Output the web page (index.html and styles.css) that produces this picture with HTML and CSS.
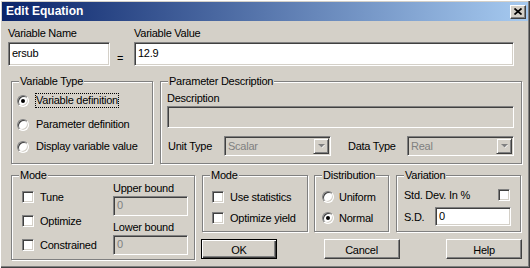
FILE: index.html
```html
<!DOCTYPE html>
<html lang="en">
<head>
    <meta charset="UTF-8">
    <title>Edit Equation</title>
    <link rel="stylesheet" href="styles.css">
</head>
<body>
    <div class="window">
        <div class="titlebar">
            <span class="title">Edit Equation</span>
            <button class="close-btn" type="button">
                <svg width="8" height="7" viewBox="0 0 8 7"><path d="M0.5 0.5 L7.5 6.5 M7.5 0.5 L0.5 6.5" stroke="#000" stroke-width="1.7" fill="none"/></svg>
            </button>
        </div>
        <div class="content">
            <div class="var-row">
                <div class="field name-field">
                    <label>Variable Name</label>
                    <div class="textbox">ersub</div>
                </div>
                <span class="equals">=</span>
                <div class="field value-field">
                    <label>Variable Value</label>
                    <div class="textbox">12.9</div>
                </div>
            </div>

            <div class="group-row">
                <fieldset class="group type-group">
                    <legend>Variable Type</legend>
                    <div class="type-body">
                        <div class="option">
                            <span class="radio checked"></span>
                            <span class="radio-label focused">Variable definition</span>
                        </div>
                        <div class="option second">
                            <span class="radio"></span>
                            <span class="radio-label">Parameter definition</span>
                        </div>
                        <div class="option third">
                            <span class="radio"></span>
                            <span class="radio-label">Display variable value</span>
                        </div>
                    </div>
                </fieldset>
                <fieldset class="group desc-group">
                    <legend>Parameter Description</legend>
                    <div class="desc-body">
                        <label>Description</label>
                        <div class="textbox disabled desc-box"></div>
                        <div class="combo-row">
                            <span class="unit-label">Unit Type</span>
                            <div class="combo">
                                <span class="combo-text">Scalar</span>
                                <span class="combo-btn"><svg width="7" height="5" viewBox="0 0 7 5"><path d="M1 1h6l-3 3z" fill="#fff"/><path d="M0 0h7l-3.5 3.5z" fill="#808080"/></svg></span>
                            </div>
                            <span class="data-label">Data Type</span>
                            <div class="combo">
                                <span class="combo-text">Real</span>
                                <span class="combo-btn"><svg width="7" height="5" viewBox="0 0 7 5"><path d="M1 1h6l-3 3z" fill="#fff"/><path d="M0 0h7l-3.5 3.5z" fill="#808080"/></svg></span>
                            </div>
                        </div>
                    </div>
                </fieldset>
            </div>

            <div class="bottom-row">
                <fieldset class="group mode-group">
                    <legend>Mode</legend>
                    <div class="mode-body">
                        <div class="check-col">
                            <div class="check-row"><span class="checkbox"></span><span class="check-label">Tune</span></div>
                            <div class="check-row"><span class="checkbox"></span><span class="check-label">Optimize</span></div>
                            <div class="check-row"><span class="checkbox"></span><span class="check-label">Constrained</span></div>
                        </div>
                        <div class="bound-col">
                            <label>Upper bound</label>
                            <div class="textbox disabled bound-box">0</div>
                            <label class="lower">Lower bound</label>
                            <div class="textbox disabled bound-box">0</div>
                        </div>
                    </div>
                </fieldset>

                <div class="right-col">
                    <div class="small-groups">
                        <fieldset class="group stat-group">
                            <legend>Mode</legend>
                            <div class="stat-body">
                                <div class="check-row"><span class="checkbox"></span><span class="check-label">Use statistics</span></div>
                                <div class="check-row"><span class="checkbox"></span><span class="check-label">Optimize yield</span></div>
                            </div>
                        </fieldset>
                        <fieldset class="group dist-group">
                            <legend>Distribution</legend>
                            <div class="dist-body">
                                <div class="dist-row"><span class="radio"></span><span class="dist-label">Uniform</span></div>
                                <div class="dist-row"><span class="radio checked"></span><span class="dist-label">Normal</span></div>
                            </div>
                        </fieldset>
                        <fieldset class="group var-group">
                            <legend>Variation</legend>
                            <div class="var-body">
                                <div class="std-row">
                                    <span>Std. Dev. In %</span>
                                    <span class="checkbox"></span>
                                </div>
                                <div class="sd-row">
                                    <span>S.D.</span>
                                    <div class="textbox sd-box">0</div>
                                </div>
                            </div>
                        </fieldset>
                    </div>
                    <div class="buttons">
                        <button class="btn default" type="button">OK</button>
                        <button class="btn" type="button">Cancel</button>
                        <button class="btn" type="button">Help</button>
                    </div>
                </div>
            </div>
        </div>
    </div>
</body>
</html>
```

FILE: styles.css
```css
body {
    margin: 0;
    font-family: "Liberation Sans", Arial, sans-serif;
    font-size: 11px;
    letter-spacing: -0.25px;
    color: #000000;
    background-color: #d4d0c8;
}
.window {
    width: 530px;
    height: 268px;
    box-sizing: border-box;
    padding: 2px;
    background-color: #d4d0c8;
    box-shadow: inset 1px 1px #ffffff, inset -1px -1px #404040, inset -2px -2px #808080;
}
.titlebar {
    display: flex;
    justify-content: space-between;
    align-items: center;
    height: 19px;
    padding-left: 4px;
    background: linear-gradient(to right, #0a246a, #a6caf0);
}
.title {
    color: #ffffff;
    font-weight: bold;
    font-size: 12px;
    letter-spacing: 0;
    line-height: 19px;
}
.close-btn {
    display: flex;
    justify-content: center;
    align-items: center;
    width: 16px;
    height: 14px;
    margin-right: 2px;
    padding: 0;
    box-sizing: border-box;
    border: 1px solid;
    border-color: #ffffff #404040 #404040 #ffffff;
    box-shadow: inset -1px -1px #808080;
    background-color: #d4d0c8;
}
.content {
    padding: 6px 0 0 6px;
}
label {
    display: block;
    line-height: 13px;
}

/* sunken edit boxes */
.textbox {
    box-sizing: border-box;
    height: 24px;
    padding: 0 3px;
    line-height: 20px;
    border: 1px solid;
    border-color: #808080 #ffffff #ffffff #808080;
    box-shadow: inset 1px 1px #404040, inset -1px -1px #d4d0c8;
    background-color: #ffffff;
    white-space: nowrap;
}
.textbox.disabled {
    background-color: #d4d0c8;
    color: #808080;
}

.var-row {
    display: flex;
    align-items: flex-start;
}
.field label {
    margin-bottom: 2px;
}
.name-field {
    width: 102px;
}
.value-field {
    width: 380px;
}
.equals {
    width: 24px;
    box-sizing: border-box;
    padding-left: 7px;
    margin-top: 25px;
    line-height: 13px;
}

/* group boxes */
.group {
    margin: 0;
    padding: 0;
    min-width: 0;
    box-sizing: border-box;
    border: 1px solid #808080;
    box-shadow: inset 1px 1px #ffffff, 1px 1px #ffffff;
}
.group legend {
    margin-left: 7px;
    padding: 1px 1px 0;
    line-height: 13px;
    background-color: #d4d0c8;
}
.group-row {
    display: flex;
    gap: 7px;
    margin: 8px 0 0 3px;
}
.type-group {
    width: 142px;
    height: 90px;
}
.desc-group {
    width: 362px;
    height: 90px;
}

/* radio buttons and check boxes */
.radio {
    display: flex;
    justify-content: center;
    align-items: center;
    flex: none;
    width: 12px;
    height: 12px;
    box-sizing: border-box;
    border-radius: 50%;
    border: 1px solid;
    border-color: #808080 #ffffff #ffffff #808080;
    box-shadow: inset 1px 1px #404040, inset -1px -1px #d4d0c8;
    background-color: #ffffff;
}
.radio.checked::after {
    content: "";
    width: 4px;
    height: 4px;
    border-radius: 50%;
    background-color: #000000;
}
.checkbox {
    flex: none;
    width: 12px;
    height: 12px;
    box-sizing: border-box;
    border: 1px solid;
    border-color: #808080 #ffffff #ffffff #808080;
    box-shadow: inset 1px 1px #404040, inset -1px -1px #d4d0c8;
    background-color: #ffffff;
}

.type-body {
    display: flex;
    flex-direction: column;
    padding: 5px 0 0 5px;
}
.option {
    display: flex;
    align-items: center;
}
.option.second {
    margin-top: 9px;
}
.option.third {
    margin-top: 7px;
}
.radio-label {
    margin-left: 6px;
    line-height: 13px;
    border: 1px solid transparent;
}
.radio-label.focused {
    border: 1px dotted #000000;
}

.desc-body {
    padding: 4px 0 0 6px;
}
.desc-box {
    width: 347px;
    height: 22px;
    margin-top: 1px;
}
.combo-row {
    display: flex;
    align-items: center;
    margin-top: 8px;
}
.unit-label {
    width: 56px;
    margin-left: 1px;
}
.data-label {
    width: 59px;
    margin-left: 17px;
}
.combo {
    display: flex;
    width: 107px;
    height: 20px;
    box-sizing: border-box;
    border: 1px solid;
    border-color: #808080 #ffffff #ffffff #808080;
    box-shadow: inset 1px 1px #404040, inset -1px -1px #d4d0c8;
    background-color: #d4d0c8;
}
.combo-text {
    flex: 1;
    padding-left: 3px;
    line-height: 18px;
    color: #808080;
}
.combo-btn {
    display: flex;
    justify-content: center;
    align-items: center;
    width: 16px;
    height: 16px;
    margin: 1px;
    box-sizing: border-box;
    border: 1px solid;
    border-color: #d4d0c8 #404040 #404040 #d4d0c8;
    box-shadow: inset 1px 1px #ffffff, inset -1px -1px #808080;
}

/* bottom part */
.bottom-row {
    display: flex;
    gap: 6px;
    margin: 4px 0 0 3px;
}
.mode-group {
    width: 184px;
    height: 92px;
}
.mode-body {
    display: flex;
    padding-left: 10px;
}
.check-col {
    display: flex;
    flex-direction: column;
    gap: 11px;
    width: 91px;
    padding-top: 8px;
}
.check-row {
    display: flex;
    align-items: center;
    height: 13px;
}
.check-label {
    margin-left: 6px;
}
.bound-col {
    width: 75px;
}
.bound-col .bound-box {
    height: 20px;
    margin-top: 1px;
    line-height: 17px;
}
.bound-col .lower {
    margin-top: 5px;
}

.right-col {
    width: 321px;
}
.small-groups {
    display: flex;
    height: 64px;
}
.stat-group {
    width: 106px;
    margin-left: 1px;
}
.dist-group {
    width: 75px;
    margin-left: 6px;
}
.var-group {
    width: 125px;
    margin-left: 7px;
}
.stat-body,
.dist-body {
    display: flex;
    flex-direction: column;
    gap: 8px;
    padding: 8px 0 0 9px;
}
.dist-body {
    padding-left: 7px;
}
.dist-row {
    display: flex;
    align-items: center;
    height: 13px;
}
.dist-label {
    margin-left: 5px;
}
.var-body {
    padding: 6px 10px 0 7px;
}
.std-row,
.sd-row {
    display: flex;
    justify-content: space-between;
    align-items: center;
}
.std-row {
    height: 13px;
}
.sd-row {
    margin-top: 6px;
}
.sd-box {
    width: 76px;
    height: 19px;
    margin-right: -1px;
    line-height: 16px;
}

.buttons {
    display: flex;
    justify-content: space-between;
    margin-top: 7px;
}
.btn {
    width: 76px;
    height: 20px;
    padding: 2px 0 0;
    box-sizing: border-box;
    font-family: inherit;
    font-size: 11px;
    letter-spacing: -0.25px;
    color: #000000;
    background-color: #d4d0c8;
    border: 1px solid;
    border-color: #ffffff #404040 #404040 #ffffff;
    box-shadow: inset -1px -1px #808080;
}
.btn.default {
    border-color: #000000;
    box-shadow: inset 1px 1px #ffffff, inset -1px -1px #404040, inset -2px -2px #808080;
}
```
